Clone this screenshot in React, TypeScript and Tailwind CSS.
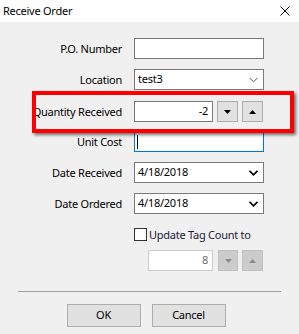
import React from "react";

const font = { fontFamily: '"Noto Sans", "Open Sans", Arial, sans-serif' };

function Chevron({ bold }: { bold?: boolean }) {
  return (
    <svg width="9" height="6" viewBox="0 0 9 6" className="shrink-0">
      <path
        d="M0.5 0.8 L4.5 4.8 L8.5 0.8"
        fill="none"
        stroke={bold ? "#000" : "#555"}
        strokeWidth={bold ? 1.6 : 1}
      />
    </svg>
  );
}

function Arrow({ up, disabled }: { up?: boolean; disabled?: boolean }) {
  return (
    <svg width="7" height="4" viewBox="0 0 7 4">
      <path d={up ? "M0 4 L3.5 0 L7 4 Z" : "M0 0 L3.5 4 L7 0 Z"} fill={disabled ? "#8a8a8a" : "#000"} />
    </svg>
  );
}

function Row({ label, children, mt }: { label: string; children: React.ReactNode; mt: string }) {
  return (
    <div className={`flex items-center ${mt}`}>
      <div className="w-[122px] text-right text-[11px] tracking-[-0.25px] text-[#000] leading-none">{label}</div>
      <div className="ml-[12px]">{children}</div>
    </div>
  );
}

export default function App() {
  return (
    <div className="relative w-[299px] h-[334px] bg-[#f0f0f0] overflow-hidden" style={font}>
      {/* Title bar */}
      <div className="h-[22px] bg-white flex items-center justify-between pl-[3px] pr-[9px]">
        <span className="text-[11px] tracking-[-0.25px] text-black">Receive Order</span>
        <svg width="10" height="10" viewBox="0 0 10 10">
          <path d="M0.5 0.5 L9.5 9.5 M9.5 0.5 L0.5 9.5" stroke="#000" strokeWidth="1" />
        </svg>
      </div>

      <div className="pt-[16px] text-[11px] tracking-[-0.25px]">
        <Row label="P.O. Number" mt="mt-0">
          <div className="w-[130px] h-[21px] bg-white border border-[#7a7a7a]" />
        </Row>

        <Row label="Location" mt="mt-[10px]">
          <div className="w-[130px] h-[21px] bg-white border border-[#7a7a7a] flex items-center justify-between pl-[3px] pr-[5px]">
            <span className="text-black">test3</span>
            <Chevron />
          </div>
        </Row>

        <Row label="Quantity Received" mt="mt-[11px]">
          <div className="flex items-center">
            <div className="w-[79px] h-[21px] bg-white border border-[#7a7a7a] flex items-center justify-end pr-[4px]">
              <span className="text-black">-2</span>
            </div>
            <div className="ml-[4px] w-[21px] h-[21px] bg-[#e1e1e1] border border-[#adadad] flex items-center justify-center">
              <Arrow />
            </div>
            <div className="ml-[4px] w-[21px] h-[21px] bg-[#e1e1e1] border border-[#adadad] flex items-center justify-center">
              <Arrow up />
            </div>
          </div>
        </Row>

        <Row label="Unit Cost" mt="mt-[9px]">
          <div className="w-[130px] h-[21px] bg-white border border-[#0078d7] flex items-center pl-[2px]">
            <div className="w-[1px] h-[14px] bg-black" />
          </div>
        </Row>

        <Row label="Date Received" mt="mt-[10px]">
          <div className="w-[130px] h-[21px] bg-white border border-[#7a7a7a] flex items-center justify-between pl-[3px] pr-[5px]">
            <span className="text-black">4/18/2018</span>
            <Chevron bold />
          </div>
        </Row>

        <Row label="Date Ordered" mt="mt-[10px]">
          <div className="w-[130px] h-[21px] bg-white border border-[#7a7a7a] flex items-center justify-between pl-[3px] pr-[5px]">
            <span className="text-black">4/18/2018</span>
            <Chevron bold />
          </div>
        </Row>

        <div className="flex items-center mt-[14px] ml-[134px]">
          <div className="w-[13px] h-[13px] bg-white border border-[#333]" />
          <span className="ml-[2px] text-[#1a1a3a] leading-none">Update Tag Count to</span>
        </div>

        <div className="flex items-center mt-[9px] ml-[148px]">
          <div className="w-[65px] h-[21px] bg-white border border-[#cccccc] flex items-center justify-end pr-[4px]">
            <span className="text-[#6d6d6d]">8</span>
          </div>
          <div className="ml-[5px] w-[20px] h-[21px] bg-[#cccccc] border border-[#bfbfbf] flex items-center justify-center">
            <Arrow disabled />
          </div>
          <div className="ml-[4px] w-[21px] h-[21px] bg-[#cccccc] border border-[#bfbfbf] flex items-center justify-center">
            <Arrow up disabled />
          </div>
        </div>

        <div className="mt-[20px] mx-[18px] h-[1px] bg-[#a0a0a0]" />

        <div className="flex justify-center gap-[11px] mt-[12px] pr-[7px]">
          <button className="w-[74px] h-[23px] bg-[#e1e1e1] border border-[#adadad] text-black">OK</button>
          <button className="w-[74px] h-[23px] bg-[#e1e1e1] border border-[#adadad] text-black">Cancel</button>
        </div>
      </div>

      {/* Red highlight annotation */}
      <div className="absolute left-[32px] top-[91px] w-[262px] h-[42px] border-4 border-[#ff0000] shadow-[2px_2px_3px_rgba(0,0,0,0.55)]" />
    </div>
  );
}
